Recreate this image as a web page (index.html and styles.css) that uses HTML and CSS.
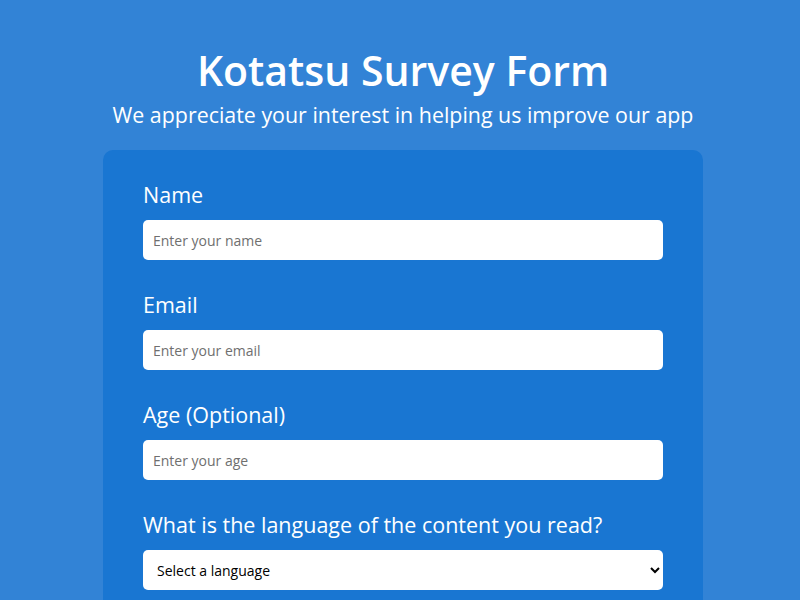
FILE: index.html
```html
<!DOCTYPE html>
<html lang="en">
<head>
<meta charset="utf-8">
<title>Kotatsu Survey Form</title>
<link rel="stylesheet" href="styles.css">
</head>
<body>
<header class="header">
  <h1 class="title">Kotatsu Survey Form</h1>
  <p class="subtitle">We appreciate your interest in helping us improve our app</p>
</header>
<main class="card">
  <form class="form">
    <div class="group">
      <label class="label" for="name">Name</label>
      <input class="input" id="name" type="text" placeholder="Enter your name">
    </div>
    <div class="group">
      <label class="label" for="email">Email</label>
      <input class="input" id="email" type="email" placeholder="Enter your email">
    </div>
    <div class="group">
      <label class="label" for="age">Age (Optional)</label>
      <input class="input" id="age" type="number" placeholder="Enter your age">
    </div>
    <div class="group">
      <label class="label" for="lang">What is the language of the content you read?</label>
      <select class="select" id="lang">
        <option>Select a language</option>
      </select>
    </div>
  </form>
</main>
</body>
</html>
```
FILE: styles.css
```css
* { box-sizing: border-box; }
body {
  margin: 0;
  padding-left: 6px;
  background: #3283d6;
  font-family: "Open Sans", "Liberation Sans", sans-serif;
  color: #fff;
}
.header {
  text-align: center;
  padding-top: 40px;
}
.title {
  margin: 0;
  font-size: 41px;
  font-weight: 600;
  line-height: 60px;
}
.subtitle {
  margin: 0;
  font-size: 21.4px;
  line-height: 30px;
}
.card {
  width: 600px;
  margin: 20px auto 0;
  background: #1976d2;
  border-radius: 10px;
  padding: 30px 40px;
}
.group {
  display: flex;
  flex-direction: column;
  margin-bottom: 30px;
}
.label {
  font-size: 21.5px;
  line-height: 30px;
  margin-bottom: 10px;
}
.input, .select {
  height: 40px;
  border: none;
  border-radius: 5px;
  background: #fff;
  font-family: inherit;
  font-size: 14px;
  padding: 0 10px;
}
.input::placeholder { color: #6f6f6f; }
.select {
  color: #000;
  padding: 0 10px;
}
```
